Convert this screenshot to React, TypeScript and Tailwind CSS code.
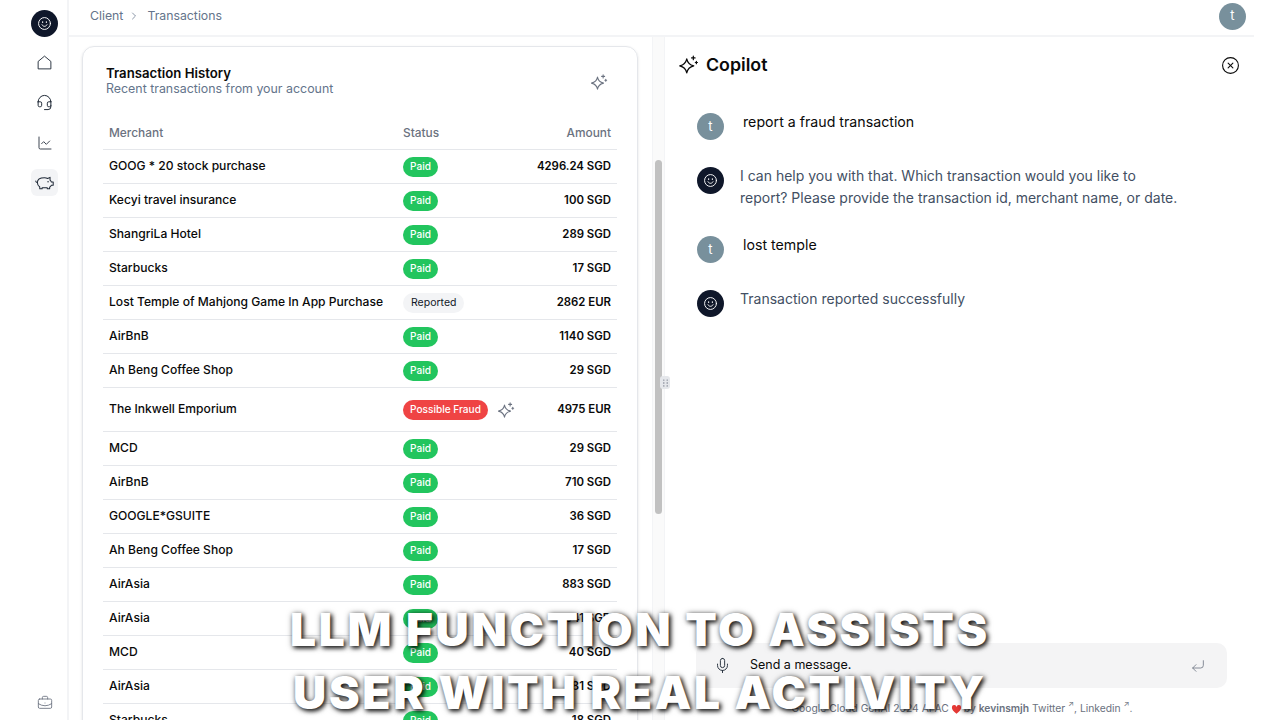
import React from 'react';
import { Headset, ChartLine, BriefcaseBusiness, Mic, CornerDownLeft, CircleX, ChevronRight } from 'lucide-react';

type Row = { merchant: string; status: 'Paid' | 'Reported' | 'Possible Fraud'; amount: string };

const rows: Row[] = [
  { merchant: 'GOOG * 20 stock purchase', status: 'Paid', amount: '4296.24 SGD' },
  { merchant: 'Kecyi travel insurance', status: 'Paid', amount: '100 SGD' },
  { merchant: 'ShangriLa Hotel', status: 'Paid', amount: '289 SGD' },
  { merchant: 'Starbucks', status: 'Paid', amount: '17 SGD' },
  { merchant: 'Lost Temple of Mahjong Game In App Purchase', status: 'Reported', amount: '2862 EUR' },
  { merchant: 'AirBnB', status: 'Paid', amount: '1140 SGD' },
  { merchant: 'Ah Beng Coffee Shop', status: 'Paid', amount: '29 SGD' },
  { merchant: 'The Inkwell Emporium', status: 'Possible Fraud', amount: '4975 EUR' },
  { merchant: 'MCD', status: 'Paid', amount: '29 SGD' },
  { merchant: 'AirBnB', status: 'Paid', amount: '710 SGD' },
  { merchant: 'GOOGLE*GSUITE', status: 'Paid', amount: '36 SGD' },
  { merchant: 'Ah Beng Coffee Shop', status: 'Paid', amount: '17 SGD' },
  { merchant: 'AirAsia', status: 'Paid', amount: '883 SGD' },
  { merchant: 'AirAsia', status: 'Paid', amount: '341 SGD' },
  { merchant: 'MCD', status: 'Paid', amount: '40 SGD' },
  { merchant: 'AirAsia', status: 'Paid', amount: '581 SGD' },
  { merchant: 'Starbucks', status: 'Paid', amount: '18 SGD' },
];

const Sparkle = ({ className }: { className?: string }) => (
  <svg viewBox="0 0 24 24" fill="none" stroke="currentColor" strokeWidth="1.4" strokeLinejoin="round" strokeLinecap="round" className={className}>
    <path d="M10 5.500c.9 4.500 3.200 6.900 8 8-4.800 1.100-7.100 3.500-8 8-.9-4.500-3.200-6.900-8-8 4.800-1.100 7.100-3.500 8-8z" />
    <path d="M17.500 2.500v4M15.500 4.500h4M21 8.500v2.500M19.800 9.700h2.400" />
  </svg>
);

const Smile = ({ className }: { className?: string }) => (
  <svg viewBox="0 0 24 24" fill="none" stroke="currentColor" strokeWidth="1.5" strokeLinecap="round" className={className}>
    <circle cx="12" cy="12" r="9.500" />
    <path d="M8 14c1 1.700 2.400 2.500 4 2.500s3-.8 4-2.500" />
    <path d="M9 9.500v.5M15 9.500v.5" strokeWidth="2" />
  </svg>
);

const Piggy = ({ className }: { className?: string }) => (
  <svg viewBox="0 0 24 24" fill="none" stroke="currentColor" strokeWidth="1.300" strokeLinejoin="round" strokeLinecap="round" className={className}>
    <path d="M3 12c0-3.800 4-6 9-6 1.800 0 3 .4 4 1l3-1.500v3.600c.9.8 1.400 1.600 1.700 2.400H23v4h-2.300c-.5 1-1.300 1.800-2.200 2.500V20h-3v-1.300H9V20H6v-2.300C4.200 16.500 3 14.500 3 12z" />
    <path d="M16.500 11v.2" strokeWidth="1.800" />
    <path d="M3 12c-1 0-2-.6-2-1.800" />
  </svg>
);

const BotAvatar = () => (
  <div className="w-[27px] h-[27px] shrink-0 rounded-full bg-[#0f172a] flex items-center justify-center text-white">
    <Smile className="w-[15px] h-[15px]" />
  </div>
);

const UserAvatar = () => (
  <div className="w-[27px] h-[27px] shrink-0 rounded-full bg-[#78909c] flex items-center justify-center text-white text-[13px]">t</div>
);

const StatusBadge = ({ status }: { status: Row['status'] }) => {
  if (status === 'Paid') {
    return <span className="h-[20px] px-[7px] rounded-full bg-[#22c55e] text-white text-[10.100px] font-medium flex items-center">Paid</span>;
  }
  if (status === 'Reported') {
    return <span className="h-[20px] px-[8px] rounded-full bg-[#f3f4f6] text-[#111827] text-[10.500px] flex items-center">Reported</span>;
  }
  return (
    <>
      <span className="h-[20px] px-[7px] rounded-full bg-[#ef4444] text-white text-[10.100px] font-medium flex items-center">Possible Fraud</span>
      <Sparkle className="w-[18px] h-[18px] ml-[9px] text-[#6b7280]" />
    </>
  );
};

export default function App() {
  return (
    <div className="relative h-[720px] w-[1280px] overflow-hidden bg-white flex pl-[22px] pr-[26px] font-['Inter',sans-serif] text-[#0a0a0a]">
      {/* sidebar */}
      <aside className="w-[47px] shrink-0 border-r-2 border-[#f3f4f6] flex flex-col items-center pt-[10px] pb-[9px]">
        <BotAvatar />
        <nav className="flex flex-col items-center gap-[13px] mt-[12px] text-[#1f2937]">
          <div className="w-[27px] h-[27px] flex items-center justify-center">
            <svg viewBox="0 0 24 24" fill="none" stroke="currentColor" strokeWidth="1.300" strokeLinejoin="round" className="w-[17px] h-[17px]">
              <path d="M3 10.500 12 3l9 7.500V21H3z" />
            </svg>
          </div>
          <div className="w-[27px] h-[27px] flex items-center justify-center"><Headset className="w-[17px] h-[17px]" strokeWidth={1.4} /></div>
          <div className="w-[27px] h-[27px] flex items-center justify-center"><ChartLine className="w-[16px] h-[16px]" strokeWidth={1.300} /></div>
          <div className="w-[27px] h-[27px] rounded-md bg-[#f3f4f6] flex items-center justify-center"><Piggy className="w-[19px] h-[19px]" /></div>
        </nav>
        <div className="mt-auto text-[#6b7280]"><BriefcaseBusiness className="w-[16px] h-[16px]" strokeWidth={1.300} /></div>
      </aside>

      <div className="flex-1 min-w-0 flex flex-col">
        <header className="h-[37px] shrink-0 border-b-2 border-[#f3f4f6] flex items-center pl-[21px] pr-[8px] pb-[3px] text-[12.300px] text-[#64748b]">
          <span>Client</span>
          <ChevronRight className="w-[12px] h-[12px] mx-[5px]" strokeWidth={1.500} />
          <span className="ml-[2px]">Transactions</span>
          <div className="ml-auto"><UserAvatar /></div>
        </header>

        <div className="flex-1 min-h-0 flex">
          {/* left panel */}
          <section className="w-[583px] shrink-0 pl-[13px] pr-[14px] pt-[9px] overflow-hidden">
            <div className="border border-[#e5e7eb] rounded-[12px] shadow-sm px-[20px] pt-[19px] h-[900px]">
              <div className="flex items-start justify-between pl-[3px] pr-[9px]">
                <div>
                  <h2 className="text-[13.200px] leading-[15px] font-semibold">Transaction History</h2>
                  <p className="text-[12.400px] leading-[15px] text-[#64748b]">Recent transactions from your account</p>
                </div>
                <Sparkle className="w-[18px] h-[18px] mt-[7px] text-[#6b7280]" />
              </div>
              <div className="mt-[22px] h-[32px] pb-[2px] border-b border-[#e5e7eb] flex items-center px-[6px] text-[11.900px] font-medium text-[#6b7280]">
                <span className="w-[294px] shrink-0">Merchant</span>
                <span>Status</span>
                <span className="ml-auto">Amount</span>
              </div>
              {rows.map((r, i) => (
                <div key={i} className={`${r.status === 'Possible Fraud' ? 'h-[44px]' : 'h-[34px]'} border-b border-[#e5e7eb] flex items-center px-[6px]`}>
                  <span className="w-[294px] shrink-0 text-[12.100px] font-medium whitespace-nowrap">{r.merchant}</span>
                  <StatusBadge status={r.status} />
                  <span className="ml-auto text-[11.400px] font-semibold whitespace-nowrap">{r.amount}</span>
                </div>
              ))}
            </div>
          </section>

          {/* scrollbar and resize handle */}
          <div className="relative w-[13px] shrink-0 border-x border-[#f3f4f6] bg-[#fafafa] pt-[123px] px-[2px]">
            <div className="w-[7px] h-[354px] rounded-full bg-[#c1c1c1]" />
            <div className="absolute left-[7px] top-[339px] w-[10px] h-[13px] rounded-[3px] bg-[#e5e7eb] flex items-center justify-center">
              <svg viewBox="0 0 6 9" className="w-[5px] h-[8px] fill-[#6b7280]">
                <circle cx="1" cy="1" r=".8" /><circle cx="5" cy="1" r=".8" />
                <circle cx="1" cy="4.500" r=".8" /><circle cx="5" cy="4.500" r=".8" />
                <circle cx="1" cy="8" r=".8" /><circle cx="5" cy="8" r=".8" />
              </svg>
            </div>
          </div>

          {/* copilot */}
          <section className="flex-1 min-w-0 flex flex-col pl-[13px] pr-[14px] pt-[16px]">
            <div className="flex items-center">
              <Sparkle className="w-[21px] h-[21px] -mt-[2px]" />
              <h1 className="ml-[7px] text-[17.800px] leading-[24px] font-semibold">Copilot</h1>
              <CircleX className="ml-auto w-[19px] h-[19px]" strokeWidth={1.400} />
            </div>
            <div className="mt-[36px] pl-[19px] flex flex-col">
              <div className="flex items-start h-[54px]">
                <UserAvatar />
                <p className="ml-[19px] text-[14.200px] leading-[22px] -mt-[2px]">report a fraud transaction</p>
              </div>
              <div className="flex items-start h-[69px]">
                <BotAvatar />
                <p className="ml-[16px] text-[14px] leading-[22px] -mt-[2px] text-[#424f63] w-[446px]">I can help you with that. Which transaction would you like to report? Please provide the transaction id, merchant name, or date.</p>
              </div>
              <div className="flex items-start h-[54px]">
                <UserAvatar />
                <p className="ml-[19px] text-[14.200px] leading-[22px] -mt-[2px]">lost temple</p>
              </div>
              <div className="flex items-start">
                <BotAvatar />
                <p className="ml-[16px] text-[14px] leading-[22px] -mt-[2px] text-[#424f63]">Transaction reported successfully</p>
              </div>
            </div>
            <div className="mt-auto ml-[18px] mr-[13px] h-[45px] rounded-[10px] bg-[#f4f4f5] flex items-center pl-[18px] pr-[21px]">
              <Mic className="w-[17px] h-[17px] text-[#1f2937]" strokeWidth={1.300} />
              <span className="ml-[19px] text-[12.500px]">Send a message.</span>
              <CornerDownLeft className="ml-auto w-[16px] h-[16px] text-[#6b7280]" strokeWidth={1.200} />
            </div>
            <p className="h-[32px] pt-[10px] pl-[6px] flex items-center justify-center text-[10.300px] text-[#6b7280] whitespace-nowrap">
              Google Cloud GenAI 2024 APAC
              <svg viewBox="0 0 24 24" className="w-[11px] h-[11px] mx-[2px] fill-[#e53935]">
                <path d="M12 21C5 15.500 2 12 2 8a5 5 0 0 1 10-1.500A5 5 0 0 1 22 8c0 4-3 7.500-10 13z" />
              </svg>
              by&nbsp;<b className="font-semibold">kevinsmjh</b>&nbsp;Twitter&nbsp;<sup>↗</sup>, Linkedin&nbsp;<sup>↗</sup>.
            </p>
          </section>
        </div>
      </div>

      {/* caption over the video frame */}
      <div className="absolute left-0 right-0 top-[598px] flex flex-col items-center font-['Inter',sans-serif] font-black text-white text-[46px] leading-[63px] tracking-[2.700px] whitespace-nowrap [text-shadow:2px_2px_4px_rgba(0,0,0,0.8),1px_1px_6px_rgba(0,0,0,0.6)]">
        <div>LLM FUNCTION TO ASSISTS</div>
        <div>USER WITH REAL ACTIVITY</div>
      </div>
    </div>
  );
}
